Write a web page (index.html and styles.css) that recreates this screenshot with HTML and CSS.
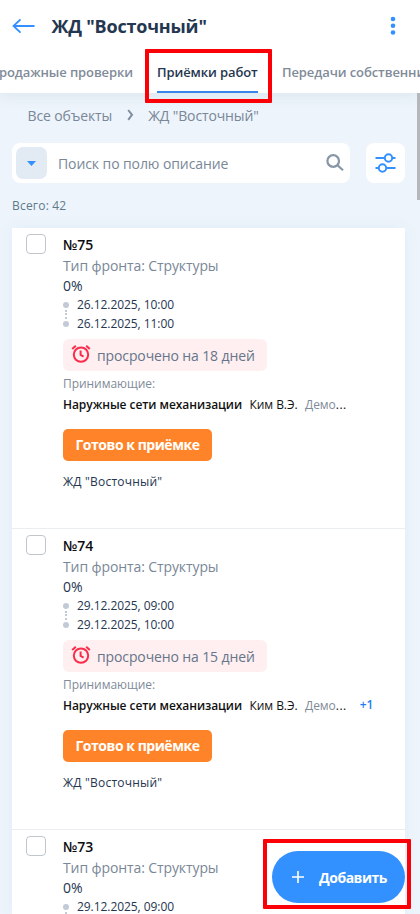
FILE: index.html
```html
<!DOCTYPE html>
<html lang="ru">
<head>
<meta charset="utf-8">
<title>ЖД "Восточный"</title>
<link rel="stylesheet" href="styles.css">
</head>
<body>
<svg class="defs" width="0" height="0">
  <symbol id="alarm" viewBox="0 0 20 20"><g fill="none" stroke="#fb2c49" stroke-width="2"><circle cx="10" cy="10.600" r="7.200"/><path d="M9.600 6.500v4.500l3 1.600M1.200 5l3.600-3.300M18.800 5l-3.600-3.300"/></g></symbol>
</svg>
<div class="screen">
<header class="header">
  <div class="titlebar">
    <svg class="back" width="24" height="16" viewBox="0 0 24 16"><path d="M22.500 8H2M8.500 1.300 1.500 8l7 6.700" fill="none" stroke="#3390ff" stroke-width="1.800"/></svg>
    <h1 class="title">ЖД "Восточный"</h1>
    <svg class="more" width="6" height="20" viewBox="0 0 6 20" fill="#3390ff"><circle cx="3" cy="3" r="2.300"/><circle cx="3" cy="9.700" r="2.300"/><circle cx="3" cy="16.500" r="2.300"/></svg>
  </div>
  <nav class="tabs">
    <span class="tab tab-prev">родажные проверки</span>
    <span class="tab tab-active">Приёмки работ</span>
    <span class="tab">Передачи собственни</span>
  </nav>
</header>
<main class="main">
  <div class="crumbs"><span>Все объекты</span><svg width="7" height="12" viewBox="0 0 7 12"><path d="M1.200 1 5 5.800 1.200 10.800" fill="none" stroke="#7f8e9f" stroke-width="2"/></svg><span>ЖД "Восточный"</span></div>
  <div class="tools">
    <div class="search">
      <span class="drop"><svg width="9" height="5" viewBox="0 0 9 5"><path d="M0 0h9L4.500 5z" fill="#3390ff"/></svg></span>
      <span class="placeholder">Поиск по полю описание</span>
      <svg class="loupe" width="18" height="18" viewBox="0 0 18 18" fill="none" stroke="#8696a7" stroke-width="2.200"><circle cx="7.200" cy="7" r="5.800"/><path d="M11.500 11.300 17 16.300"/></svg>
    </div>
    <div class="filter"><svg width="21" height="20" viewBox="0 0 21 20" fill="#fff" stroke="#3390ff" stroke-width="2"><path d="M.5 5H20.500M.5 15H20.500"/><circle cx="13.500" cy="5" r="3.700"/><circle cx="7.500" cy="15" r="3.700"/></svg></div>
  </div>
  <div class="total">Всего: 42</div>
  <section class="list">
    <article class="item">
      <span class="check"></span>
      <div class="info">
        <div class="num">№75</div>
        <div class="type">Тип фронта: Структуры</div>
        <div class="pct">0%</div>
        <div class="dates"><div class="date">26.12.2025, 10:00</div><div class="date">26.12.2025, 11:00</div></div>
        <div class="late"><svg width="20" height="20"><use href="#alarm"/></svg><span>просрочено на 18 дней</span></div>
        <div class="label">Принимающие:</div>
        <div class="people"><b>Наружные сети механизации</b><span>Ким В.Э.</span><span class="more-people"><i>Демо</i>...</span></div>
        <div class="status">Готово к приёмке</div>
        <div class="place">ЖД "Восточный"</div>
      </div>
    </article>
    <article class="item">
      <span class="check"></span>
      <div class="info">
        <div class="num">№74</div>
        <div class="type">Тип фронта: Структуры</div>
        <div class="pct">0%</div>
        <div class="dates"><div class="date">29.12.2025, 09:00</div><div class="date">29.12.2025, 10:00</div></div>
        <div class="late"><svg width="20" height="20"><use href="#alarm"/></svg><span>просрочено на 15 дней</span></div>
        <div class="label">Принимающие:</div>
        <div class="people"><b>Наружные сети механизации</b><span>Ким В.Э.</span><span class="more-people"><i>Демо</i>...</span><em>+1</em></div>
        <div class="status">Готово к приёмке</div>
        <div class="place">ЖД "Восточный"</div>
      </div>
    </article>
    <article class="item item-last">
      <span class="check"></span>
      <div class="info">
        <div class="num">№73</div>
        <div class="type">Тип фронта: Структуры</div>
        <div class="pct">0%</div>
        <div class="dates"><div class="date">29.12.2025, 09:00</div></div>
      </div>
    </article>
  </section>
</main>
<div class="scroll"></div>
<button class="add"><svg width="12" height="12" viewBox="0 0 12 12"><path d="M6 0v12M0 6h12" stroke="#fff" stroke-width="1.600"/></svg><span>Добавить</span></button>
<div class="mark mark-tab"></div>
<div class="mark mark-add"></div>
</div>
</body>
</html>
```

FILE: styles.css
```css
* { box-sizing: border-box; }
body {
  margin: 0;
  font-family: "Open Sans", "Noto Sans", sans-serif;
  color: #253650;
  white-space: nowrap;
}
.screen { position: relative; width: 420px; height: 914px; overflow: hidden; background: #edf4fb; }
.defs { position: absolute; }
.header { position: relative; height: 93px; background: #fff; box-shadow: 0 2px 14px rgba(60, 85, 120, .1); }
.titlebar { display: flex; align-items: center; height: 51px; padding: 0 24px 0 12px; }
.title { margin: 0 auto 0 15.500px; font-size: 18px; line-height: 24px; font-weight: 700; letter-spacing: -.2px; }
.tabs { display: flex; gap: 24px; height: 42px; overflow: hidden; }
.tab { flex: none; height: 42px; font-size: 13px; line-height: 42px; font-weight: 600; letter-spacing: -.1px; color: #7f8b99; }
.tab-prev { display: flex; justify-content: flex-end; width: 133px; }
.tab-active { width: 101px; color: #253650; border-bottom: 2px solid #3886e8; }
.crumbs { display: flex; align-items: center; gap: 15px; height: 20px; margin: 12px 0 0 27.500px; font-size: 14px; letter-spacing: -.13px; color: #7a8797; }
.crumbs svg { margin-right: -1px; }
.tools { display: flex; gap: 16px; margin: 18px 15px 0 12px; }
.search { display: flex; align-items: center; width: 338px; height: 40px; padding: 0 6px 0 4px; background: #fff; border-radius: 8px; }
.drop { display: flex; align-items: center; justify-content: center; width: 31px; height: 32px; border-radius: 7px; background: #e2eaf4; }
.placeholder { margin: 0 auto 0 11px; font-size: 14px; letter-spacing: -.09px; color: #7a8797; }
.filter { display: flex; align-items: center; justify-content: center; width: 39px; height: 40px; background: #fff; border-radius: 8px; }
.total { margin: 13px 0 0 12px; height: 32px; font-size: 12px; line-height: 20px; letter-spacing: .2px; color: #607a8a; }
.list { margin: 0 15px 0 12px; background: #fff; box-shadow: 0 0 14px rgba(100, 150, 200, .08); }
.item { display: flex; height: 301px; padding: 6px 0 0 14px; border-bottom: 1px solid #ebeef1; }
.item-last { height: 85px; border-bottom: 0; }
.check { flex: none; width: 20px; height: 20px; border: 1px solid #c0c6ce; border-radius: 4px; }
.info { margin-left: 17px; }
.num { font-size: 14px; line-height: 22px; font-weight: 600; color: #0b0d10; }
.type { font-size: 14px; line-height: 20px; letter-spacing: -.1px; color: #7a8797; }
.pct { font-size: 14px; line-height: 20px; }
.dates { display: flex; flex-direction: column; margin-top: -1px; }
.date { position: relative; padding-left: 14px; font-size: 12px; line-height: 19px; letter-spacing: -.06px; }
.date::before { content: ""; position: absolute; left: 0; top: 7px; width: 6px; height: 6px; border-radius: 50%; background: #c3cad7; }
.date:first-child::after { content: ""; position: absolute; left: 2px; top: 15px; height: 9px; border-left: 2px dotted #c3cad7; }
.late { display: flex; align-items: center; gap: 6px; width: 204px; height: 32px; margin-top: 6px; padding-left: 8px; border-radius: 6px; background: #ffeff0; font-size: 14px; letter-spacing: -.12px; color: #66758a; }
.late svg { margin-top: -2px; }
.label { margin-top: 4px; font-size: 12px; line-height: 18px; letter-spacing: -.05px; color: #7f8b99; }
.people { display: flex; gap: 7.500px; margin-top: 1px; font-size: 12px; line-height: 21px; letter-spacing: -.06px; color: #111; }
.people b { font-weight: 600; }
.people i { font-style: normal; letter-spacing: -.06px; color: #7f8b99; }
.more-people { letter-spacing: .5px; }
.people em { font-style: normal; font-weight: 600; color: #1f7ff0; margin: -1px 0 0 5.500px; }
.status { width: 149px; height: 32px; margin-top: 14px; border-radius: 5px; background: #ff8429; color: #fff; text-align: center; font-size: 14px; line-height: 31px; font-weight: 700; letter-spacing: -.46px; }
.place { margin-top: 11px; font-size: 12px; line-height: 20px; font-weight: 500; letter-spacing: .22px; }
.scroll { position: absolute; left: 417px; top: 93px; width: 3px; height: 107px; background: #b4b8bc; }
.add { position: absolute; left: 272px; top: 851px; width: 133px; height: 52px; padding: 0 0 0 20px; display: flex; align-items: center; gap: 15px; border: 0; border-radius: 26px; background: #3390ff; color: #fff; font: 700 14px "Open Sans", sans-serif; letter-spacing: -.48px; }
.mark { position: absolute; border: 4px solid #fb0007; border-radius: 1px; }
.mark-tab { left: 145px; top: 49px; width: 127px; height: 54px; }
.mark-add { left: 263px; top: 839px; width: 148px; height: 70px; }
```
